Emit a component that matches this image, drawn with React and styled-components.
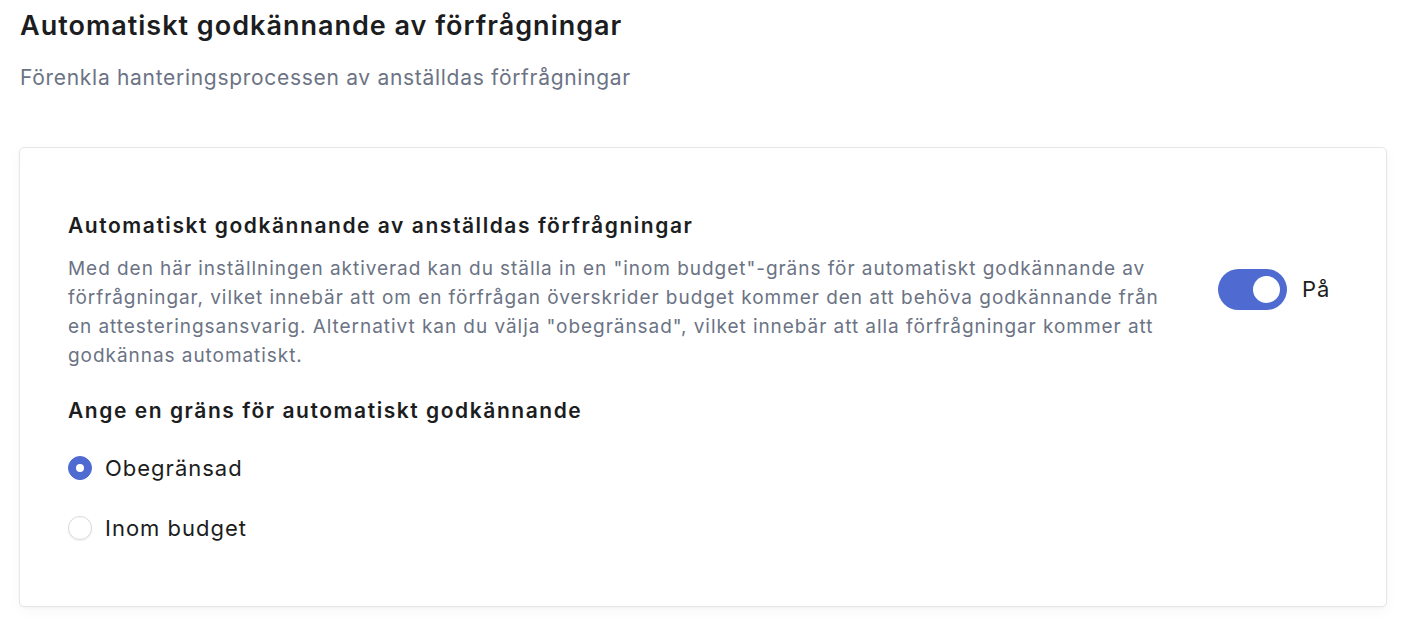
import React, { useState } from 'react';
import styled, { createGlobalStyle } from 'styled-components';

const GlobalStyle = createGlobalStyle`
  html, body {
    margin: 0;
    padding: 0;
    background: #ffffff;
    font-family: Inter, "Noto Sans", sans-serif;
    color: #1c1d21;
  }
  * { box-sizing: border-box; }
`;

const Page = styled.div`
  padding: 10px 21px 16px 19px;
`;

const Title = styled.h1`
  margin: 0 0 0 1px;
  font-size: 27px;
  line-height: 32px;
  font-weight: 600;
  letter-spacing: 1px;
  color: #1c1d21;
`;

const Subtitle = styled.p`
  margin: 22px 0 0 1px;
  font-size: 21px;
  line-height: 28px;
  letter-spacing: 0.7px;
  color: #6b7384;
`;

const Card = styled.section`
  margin-top: 55px;
  border: 1px solid #e4e6ea;
  border-radius: 5px;
  background: #ffffff;
  box-shadow: 0 4px 14px rgba(17, 24, 39, 0.035), 0 1px 2px rgba(17, 24, 39, 0.03);
  padding: 64px 48px 63px 48px;
`;

const SettingRow = styled.div`
  display: flex;
  align-items: center;
  gap: 49px;
`;

const SettingText = styled.div`
  flex: 1;
  min-width: 0;
`;

const Heading = styled.h2`
  margin: 0;
  font-size: 21px;
  line-height: 28px;
  font-weight: 600;
  letter-spacing: 1.55px;
  color: #1c1d21;
`;

const Description = styled.p`
  margin: 14px 0 0;
  font-size: 19px;
  line-height: 29px;
  letter-spacing: 0.95px;
  color: #6b7384;
`;

const ToggleGroup = styled.label`
  width: 120px;
  display: flex;
  align-items: center;
  gap: 15px;
  margin-bottom: 4px;
  cursor: pointer;
  flex-shrink: 0;
`;

const Track = styled.span`
  position: relative;
  width: 69px;
  height: 41px;
  border-radius: 21px;
  background: ${(p) => (p.$on ? '#4f6bd1' : '#d1d5db')};
  transition: background 0.15s;
`;

const Knob = styled.span`
  position: absolute;
  top: 7px;
  left: ${(p) => (p.$on ? '35px' : '7px')};
  width: 27px;
  height: 27px;
  border-radius: 50%;
  background: #ffffff;
  transition: left 0.15s;
`;

const ToggleLabel = styled.span`
  font-size: 22px;
  letter-spacing: 1px;
  color: #1c1d21;
`;

const LimitHeading = styled(Heading)`
  margin-top: 27px;
`;

const RadioList = styled.div`
  margin-top: 28px;
  display: flex;
  flex-direction: column;
  gap: 30px;
`;

const RadioOption = styled.label`
  display: flex;
  align-items: center;
  gap: 13px;
  cursor: pointer;
  font-size: 22px;
  line-height: 30px;
  letter-spacing: 1px;
  color: #1c1d21;
`;

const RadioDot = styled.span`
  width: 24px;
  height: 24px;
  border-radius: 50%;
  flex-shrink: 0;
  display: flex;
  align-items: center;
  justify-content: center;
  background: ${(p) => (p.$checked ? '#4f6bd1' : '#ffffff')};
  border: 1px solid ${(p) => (p.$checked ? '#4f6bd1' : '#d9dbe3')};
  box-shadow: ${(p) => (p.$checked ? 'none' : '0 1px 2px rgba(17, 24, 39, 0.08)')};

  &::after {
    content: '';
    display: ${(p) => (p.$checked ? 'block' : 'none')};
    width: 8px;
    height: 8px;
    border-radius: 50%;
    background: #ffffff;
  }
`;

const options = ['Obegränsad', 'Inom budget'];

const App = () => {
  const [enabled, setEnabled] = useState(true);
  const [limit, setLimit] = useState('Obegränsad');

  return (
    <Page>
      <GlobalStyle />
      <Title>Automatiskt godkännande av förfrågningar</Title>
      <Subtitle>Förenkla hanteringsprocessen av anställdas förfrågningar</Subtitle>
      <Card>
        <SettingRow>
          <SettingText>
            <Heading>Automatiskt godkännande av anställdas förfrågningar</Heading>
            <Description>
              Med den här inställningen aktiverad kan du ställa in en "inom budget"-gräns för
              automatiskt godkännande av förfrågningar, vilket innebär att om en förfrågan
              överskrider budget kommer den att behöva godkännande från en attesteringsansvarig.
              Alternativt kan du välja "obegränsad", vilket innebär att alla förfrågningar kommer
              att godkännas automatiskt.
            </Description>
          </SettingText>
          <ToggleGroup onClick={() => setEnabled(!enabled)}>
            <Track $on={enabled}>
              <Knob $on={enabled} />
            </Track>
            <ToggleLabel>{enabled ? 'På' : 'Av'}</ToggleLabel>
          </ToggleGroup>
        </SettingRow>
        <LimitHeading>Ange en gräns för automatiskt godkännande</LimitHeading>
        <RadioList>
          {options.map((o) => (
            <RadioOption key={o} onClick={() => setLimit(o)}>
              <RadioDot $checked={limit === o} />
              {o}
            </RadioOption>
          ))}
        </RadioList>
      </Card>
    </Page>
  );
};

export default App;
